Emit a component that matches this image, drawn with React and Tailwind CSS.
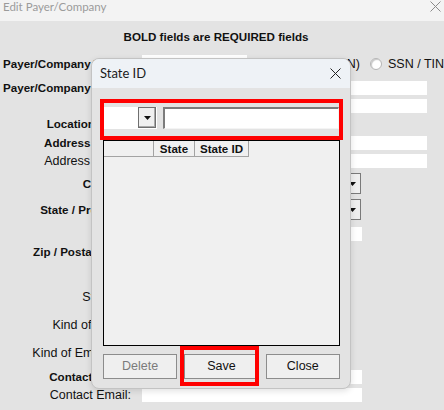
import React from 'react';

const arial = { fontFamily: '"Liberation Sans", Arial, sans-serif' };
const ui = { fontFamily: 'Lato, "Noto Sans", sans-serif' };

const Field = ({ className = '' }) => (
    <div className={`h-[14px] bg-white ${className}`} />
);

const Combo = ({ className = '' }) => (
    <div className={`flex h-[21px] border border-[#7a7a7a] bg-white ${className}`}>
        <div className="flex-1" />
        <div className="flex w-[17px] items-center justify-center border-l border-[#8a8a8a] bg-[#efefef]">
            <svg width="7" height="4" viewBox="0 0 7 4">
                <path d="M0 0h7L3.5 4z" fill="#111" />
            </svg>
        </div>
    </div>
);

const Radio = () => (
    <span className="inline-block h-[12px] w-[12px] shrink-0 rounded-full border border-[#b5b5b5] bg-white shadow-[inset_1px_1px_1px_#c8c8c8]" />
);

const Row = ({ label, bold, left, className = '', children }) => (
    <div className={`flex items-center ${className}`}>
        <div
            className={`w-[131px] shrink-0 whitespace-nowrap leading-[14px] text-[#111] ${
                bold ? 'text-[11.6px] font-bold' : 'text-[12.5px]'
            } ${left ? 'pl-[3px] text-left' : 'text-right'}`}
        >
            {label}
        </div>
        <div className="ml-[11px] flex flex-1 items-center">{children}</div>
    </div>
);

const StateIdDialog = () => (
    <div className="absolute left-[91px] top-[58px] z-10 flex h-[331px] w-[260px] flex-col overflow-hidden rounded-[8px] border border-[#c3c3c3] bg-[#e3e3e3] shadow-[0_2px_6px_rgba(0,0,0,0.12)]">
        <div className="flex h-[29px] shrink-0 items-center justify-between bg-[#eef2f6] pl-[8px] pr-[8px]">
            <span className="text-[13px] text-[#1b1b1b]" style={ui}>State ID</span>
            <svg width="11" height="11" viewBox="0 0 11 11" className="mr-[1px]">
                <path d="M0.5 0.5l10 10M10.5 0.5l-10 10" stroke="#222" strokeWidth="1" />
            </svg>
        </div>
        <div className="flex flex-1 flex-col pl-[11px] pr-[10px] pt-[19px]">
            <div className="flex h-[22px] items-stretch gap-[6px] pl-[1px] pr-[1px]">
                <div className="flex w-[53px] border-r border-b border-white bg-white">
                    <div className="flex-1" />
                    <div className="flex w-[18px] items-center justify-center border border-[#6f6f6f] bg-[#f0f0f0] shadow-[inset_-1px_-1px_0_#a9a9a9]">
                        <svg width="7" height="4" viewBox="0 0 7 4">
                            <path d="M0 0h7L3.5 4z" fill="#111" />
                        </svg>
                    </div>
                </div>
                <div className="flex-1 border-l-2 border-t-2 border-r border-b border-l-[#7c7c7c] border-t-[#7c7c7c] border-r-[#f4f4f4] border-b-[#f4f4f4] bg-white" />
            </div>
            <div className="mt-[11px] flex h-[206px] flex-col border border-black bg-[#f0f0f0]">
                <div className="flex h-[16px] text-[11.6px] font-bold text-[#111]">
                    <div className="w-[50px] border-r border-b border-[#a3a3a3]" />
                    <div className="flex w-[41px] items-center justify-center border-r border-b border-[#a3a3a3]">State</div>
                    <div className="flex w-[54px] items-center justify-center border-r border-b border-[#a3a3a3]">State ID</div>
                </div>
            </div>
            <div className="mt-[8px] grid h-[25px] grid-cols-3 gap-[7px] text-[12.5px]">
                <button className="border border-[#8c8c8c] bg-[#efefef] text-[#7b7b7b]">Delete</button>
                <button className="border border-[#8c8c8c] bg-[#efefef] text-[#111]">Save</button>
                <button className="border border-[#8c8c8c] bg-[#efefef] text-[#111]">Close</button>
            </div>
        </div>
    </div>
);

export default function App() {
    return (
        <div className="relative h-[410px] w-[444px] overflow-hidden bg-[#e3e3e3]" style={arial}>
            <div className="flex h-[21px] items-start justify-between bg-[#f3f3f3] pl-[3px] pr-[3px]">
                <span className="mt-[-1px] text-[11.5px] leading-[16px] text-[#9b9b9b]" style={ui}>
                    Edit Payer/Company
                </span>
                <svg width="11" height="11" viewBox="0 0 11 11" className="mt-[1px]">
                    <path d="M0.5 0.5l10 10M10.5 0.5l-10 10" stroke="#8a8a8a" strokeWidth="1" />
                </svg>
            </div>

            <div className="flex h-[32px] items-center justify-center pr-[12px] text-[11.6px] font-bold text-[#111]">
                BOLD fields are REQUIRED fields
            </div>

            <Row label="Payer/Company Tax Id:" bold left className="mt-[4px] h-[14px]">
                <Field className="mb-[4px] w-[105px]" />
                <div className="ml-[5px] flex w-[118px] items-center gap-[5px] text-[12.5px] leading-[14px] text-[#111]">
                    <Radio />
                    <span className="whitespace-nowrap">Federal ID (EIN)</span>
                </div>
                <div className="flex items-center gap-[6px] whitespace-nowrap text-[12.5px] leading-[14px] text-[#111]">
                    <Radio />
                    <span>SSN / TIN</span>
                </div>
            </Row>
            <Row label="Payer/Company Name:" bold left className="mt-[10px] h-[14px]">
                <Field className="w-[285px]" />
            </Row>
            <Row className="mt-[4px] h-[14px]">
                <Field className="w-[285px]" />
            </Row>
            <Row label="Location Code:" bold className="mt-[4px] h-[14px]" />
            <Row label="Address Line 1:" bold className="mt-[5px] h-[14px]">
                <Field className="w-[285px]" />
            </Row>
            <Row label="Address Line 2:" className="mt-[4px] h-[14px]">
                <Field className="w-[285px]" />
            </Row>
            <Row label="Country:" bold className="mt-[5px] h-[21px]">
                <Combo className="w-[219px]" />
            </Row>
            <Row label="State / Province:" bold className="mt-[5px] h-[21px]">
                <Combo className="w-[219px]" />
            </Row>
            <Row className="mt-[7px] h-[14px]">
                <Field className="w-[220px]" />
            </Row>
            <Row label="Zip / Postal Code:" bold className="mt-[4px] h-[14px]" />
            <Row label="State ID:" className="mt-[31px] h-[14px]" />
            <Row label="Kind of Payer:" className="mt-[14px] h-[14px]" />
            <Row label="Kind of Employer:" className="mt-[14px] h-[14px]" />
            <Row label="Contact Name:" bold className="mt-[10px] h-[14px]">
                <Field className="w-[220px]" />
            </Row>
            <Row label="Contact Email:" className="mt-[4px] h-[14px]">
                <Field className="w-[220px]" />
            </Row>

            <StateIdDialog />

            {/* highlight frames */}
            <div className="pointer-events-none absolute left-[100px] top-[99px] z-20 h-[41px] w-[243px] border-4 border-[#ff0000]" />
            <div className="pointer-events-none absolute left-[180px] top-[346px] z-20 h-[40px] w-[79px] border-4 border-[#ff0000]" />
        </div>
    );
}
